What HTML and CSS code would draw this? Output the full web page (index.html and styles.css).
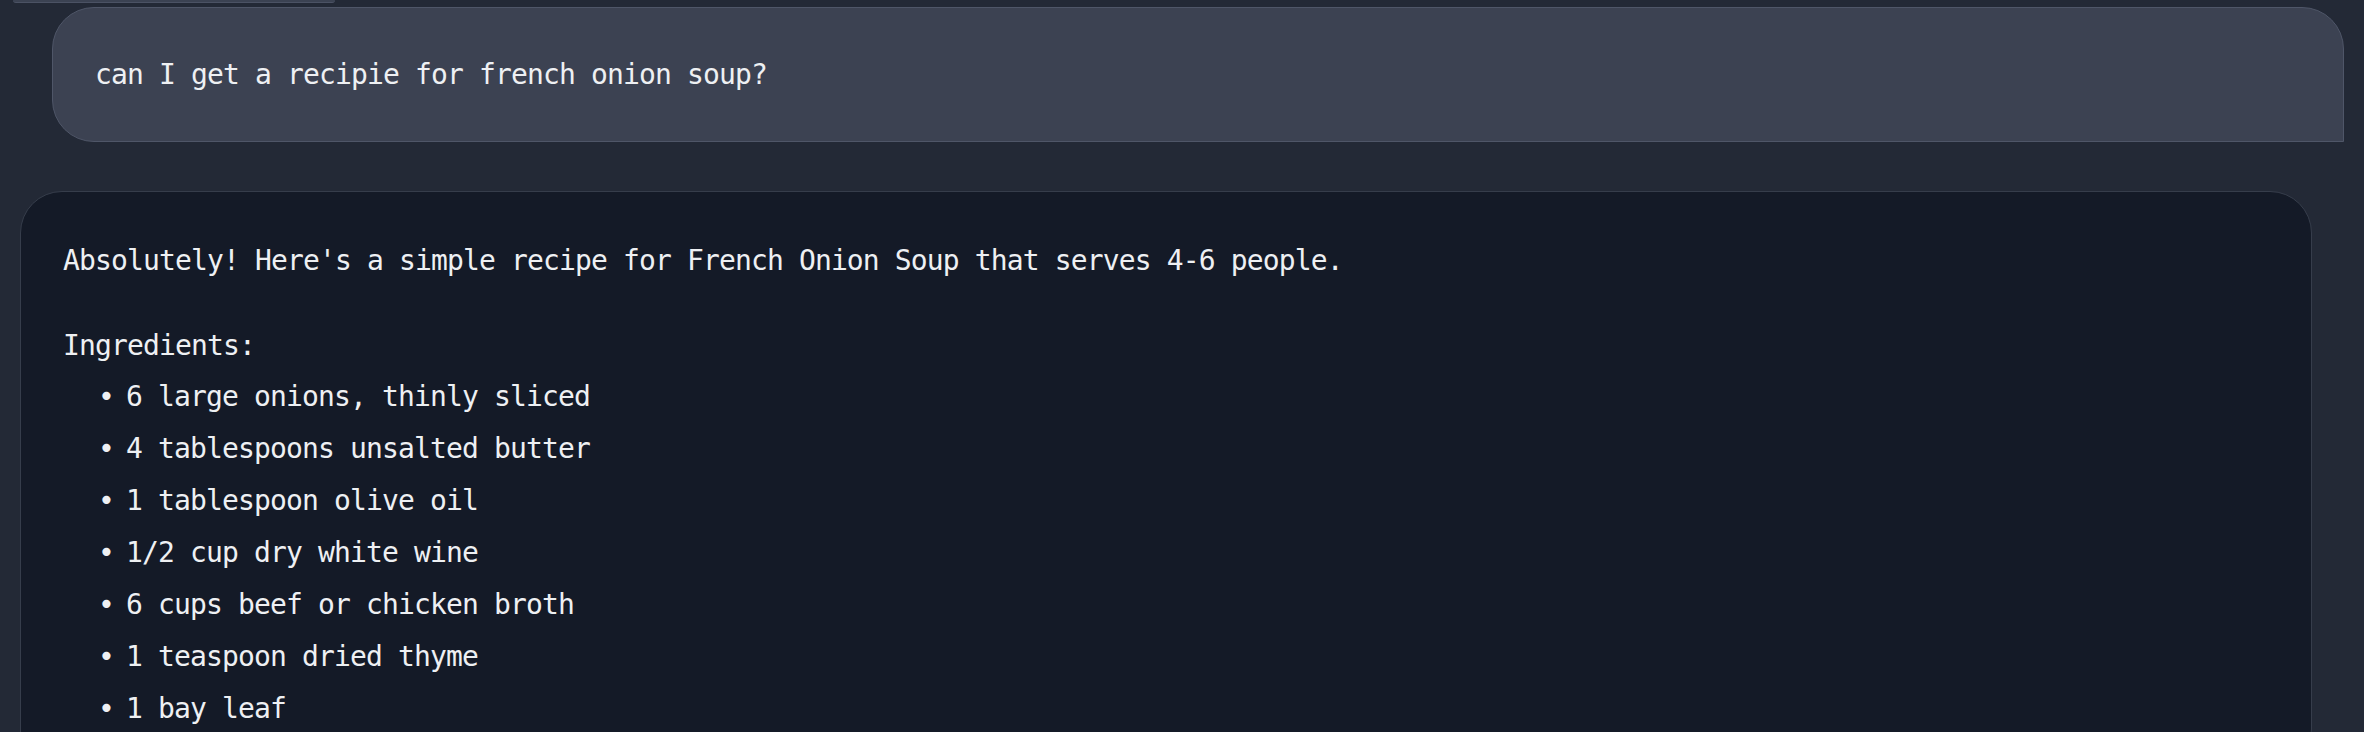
FILE: index.html
```html
<!DOCTYPE html>
<html lang="en">
<head>
<meta charset="utf-8">
<title>Chat</title>
<link rel="stylesheet" href="styles.css">
</head>
<body>
<div class="chat">
  <div class="prev"></div>
  <div class="msg user">
    <p class="line">can I get a recipie for french onion soup?</p>
  </div>
  <div class="msg bot">
    <p class="line intro">Absolutely! Here's a simple recipe for French Onion Soup that serves 4-6 people.</p>
    <p class="line">Ingredients:</p>
    <ul class="list">
      <li>6 large onions, thinly sliced</li>
      <li>4 tablespoons unsalted butter</li>
      <li>1 tablespoon olive oil</li>
      <li>1/2 cup dry white wine</li>
      <li>6 cups beef or chicken broth</li>
      <li>1 teaspoon dried thyme</li>
      <li>1 bay leaf</li>
    </ul>
  </div>
</div>
</body>
</html>
```

FILE: styles.css
```css
html, body {
  margin: 0;
  padding: 0;
  background: #232936;
}

.chat {
  height: 732px;
  overflow: hidden;
  display: flex;
  flex-direction: column;
  font-family: "DejaVu Sans Mono", "Liberation Mono", monospace;
  font-size: 28px;
  letter-spacing: -0.86px;
  line-height: 42px;
  color: #eef0f3;
}

.prev {
  flex: none;
  height: 2px;
  width: 322px;
  margin-left: 13px;
  background: #3b4252;
  border-bottom: 1px solid #4b5264;
  border-radius: 0 0 12px 12px;
}

.msg {
  flex: none;
  box-sizing: border-box;
}

.user {
  margin: 4px 20px 0 52px;
  padding: 46px 42px 45px 42px;
  background: #3c4252;
  border: 1px solid #4f5668;
  border-radius: 42px 42px 0 42px;
}

.bot {
  margin: 49px 52px 0 20px;
  padding: 48px 42px 40px 42px;
  background: #141a27;
  border: 1px solid #363d4b;
  border-radius: 42px 42px 42px 0;
}

.line {
  margin: 0;
  white-space: pre-wrap;
}

.intro {
  margin-bottom: 43px;
}

.list {
  list-style: none;
  margin: 9px 0 0;
  padding: 0 0 0 35px;
}

.list li {
  display: flex;
}

.list li + li {
  margin-top: 10px;
}

.list li::before {
  content: "\2022";
  flex: none;
  width: 28px;
}
```
